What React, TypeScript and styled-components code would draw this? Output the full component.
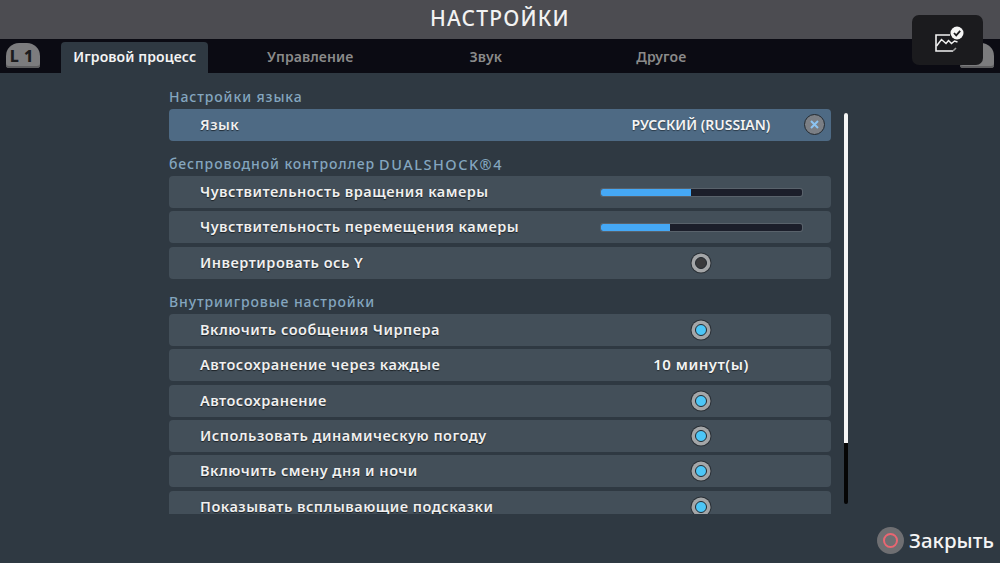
import styled, { createGlobalStyle } from "styled-components";

const GlobalStyle = createGlobalStyle`
  html, body {
    margin: 0;
    height: 100%;
    overflow: hidden;
    background: #2f3942;
  }
`;

const Screen = styled.div`
  position: relative;
  width: 1000px;
  height: 563px;
  display: flex;
  flex-direction: column;
  overflow: hidden;
  background: #2f3942;
  color: #f2f2f2;
  font-family: "Noto Sans", "Open Sans", sans-serif;
`;

const TitleBar = styled.header`
  height: 39px;
  padding-bottom: 3px;
  box-sizing: border-box;
  display: flex;
  align-items: center;
  justify-content: center;
  background: #4c4c51;
  font-size: 21px;
  font-weight: 500;
  letter-spacing: 1.2px;
`;

const TabBar = styled.nav`
  height: 34px;
  display: flex;
  align-items: flex-end;
  padding-left: 6px;
  background: #0b0b13;
`;

const Shoulder = styled.div<{ $side: "left" | "right" }>`
  width: 34px;
  height: 25px;
  margin-bottom: 5px;
  padding: ${(p) => (p.$side === "right" ? "0 10px 0 0" : "0 0 0 2px")};
  box-sizing: border-box;
  display: flex;
  align-items: center;
  justify-content: center;
  background: #7c7c7e;
  border-radius: 13px 13px 3px 3px;
  box-shadow: inset 0 -2px 0 #5e5e60;
  color: #1c1c1e;
  font-size: 16px;
  font-weight: 800;
  letter-spacing: 5px;
  margin-left: ${(p) => (p.$side === "right" ? "auto" : "0")};
  margin-right: ${(p) => (p.$side === "right" ? "6px" : "0")};
`;

const Tabs = styled.div`
  display: flex;
  margin-left: 7px;
`;

const TabCell = styled.div`
  width: 175.5px;
  display: flex;
  justify-content: center;
`;

const Tab = styled.div<{ $active?: boolean }>`
  width: 147px;
  height: 31px;
  padding-bottom: 2px;
  box-sizing: border-box;
  display: flex;
  align-items: center;
  justify-content: center;
  border-radius: 4px 4px 0 0;
  background: ${(p) => (p.$active ? "#2f3942" : "transparent")};
  color: ${(p) => (p.$active ? "#f4f4f4" : "#8a8a8a")};
  font-size: 14px;
  font-weight: 600;
  letter-spacing: 0.1px;
`;

const Body = styled.main`
  height: 441px;
  display: flex;
  align-items: flex-start;
  padding: 12px 0 0 169px;
`;

const List = styled.div`
  width: 662px;
  height: 429px;
  overflow: hidden;
`;

const Section = styled.section`
  margin-bottom: 11px;
`;

const SectionTitle = styled.h2`
  height: 24px;
  margin: 0;
  padding-bottom: 1px;
  box-sizing: border-box;
  display: flex;
  align-items: center;
  color: #84a6bf;
  font-size: 14px;
  font-weight: 500;
  letter-spacing: 0.9px;
`;

const Brand = styled.span`
  margin-left: 4px;
  font-size: 14.5px;
  letter-spacing: 1.5px;
`;

const Row = styled.div<{ $selected?: boolean }>`
  position: relative;
  height: 32px;
  margin-bottom: 3.4px;
  padding: 0 29.5px 2px 31px;
  box-sizing: border-box;
  display: flex;
  align-items: center;
  justify-content: space-between;
  border-radius: 4px;
  background: ${(p) => (p.$selected ? "#4e6a84" : "#434f59")};
`;

const Label = styled.span`
  color: #f0f0f0;
  font-size: 14.5px;
  font-weight: 600;
  letter-spacing: 0.5px;
  text-shadow: 0 1px 1px rgba(0, 0, 0, 0.6);
`;

const Control = styled.div`
  width: 201px;
  display: flex;
  align-items: center;
  justify-content: center;
`;

const Value = styled.span<{ $large?: boolean }>`
  white-space: nowrap;
  color: #f4f4f4;
  font-size: ${(p) => (p.$large ? "15px" : "14px")};
  font-weight: 600;
  letter-spacing: ${(p) => (p.$large ? "0.5px" : "0")};
  text-shadow: 0 1px 1px rgba(0, 0, 0, 0.45);
`;

const ClearButton = styled.div`
  position: absolute;
  right: 6px;
  top: 5px;
  width: 19px;
  height: 19px;
  display: flex;
  align-items: center;
  justify-content: center;
  border-radius: 50%;
  border: 1px solid #23292f;
  background: #7b7f85;
`;

const Track = styled.div`
  width: 201px;
  height: 7px;
  margin-top: 2px;
  border-radius: 2px;
  background: #1b1e2a;
  box-shadow: 0 0 0 1px #59626b;
  overflow: hidden;
`;

const Fill = styled.div`
  height: 100%;
  background: #45a8f5;
`;

const Toggle = styled.div<{ $on: boolean }>`
  width: 10px;
  height: 10px;
  margin-top: 2px;
  border-radius: 50%;
  border: 1px solid #23292f;
  background: ${(p) => (p.$on ? "#4cc6f7" : "#3a3a3c")};
  box-shadow: 0 0 0 3.5px #a4a6a8, 0 0 0 4.5px #2a3036;
`;

const Scrollbar = styled.div`
  width: 4px;
  height: 391px;
  margin: 28px 0 0 13px;
  border-radius: 2px;
  background: #050505;
  overflow: hidden;
`;

const ScrollThumb = styled.div`
  height: 330px;
  background: #f5f5f5;
`;

const Toast = styled.div`
  position: absolute;
  left: 912px;
  top: 15px;
  width: 71px;
  height: 50px;
  padding-left: 4px;
  box-sizing: border-box;
  display: flex;
  align-items: center;
  justify-content: center;
  border-radius: 7px;
  background: #1b1b1e;
`;

const CloseHint = styled.div`
  position: absolute;
  left: 877px;
  top: 526px;
  display: flex;
  align-items: center;
  gap: 5px;
  font-size: 20.5px;
  font-weight: 500;
  line-height: 28px;
  color: #f4f4f4;
`;

const CircleButton = styled.div`
  width: 27px;
  height: 27px;
  display: flex;
  align-items: center;
  justify-content: center;
  border-radius: 50%;
  background: #6f6f72;
`;

const CircleGlyph = styled.div`
  width: 11px;
  height: 11px;
  border-radius: 50%;
  border: 2px solid #ea6672;
`;

function ToastIcon() {
  return (
    <svg width="30" height="28" viewBox="0 0 30 28" fill="none">
      <path d="M15 9H1v16h17" stroke="#f2f2f2" strokeWidth="1.6" />
      <path
        d="M1.5 20l5-6.5 4.5 4 2.5-3 3 3 3-2.5 3 1"
        stroke="#f2f2f2"
        strokeWidth="1.5"
      />
      <path d="M18 25l3-3" stroke="#9a9a9a" strokeWidth="1.6" />
      <circle cx="22" cy="7" r="6.5" fill="#f5f5f5" />
      <path d="M19 7l2.2 2.3L25.2 4.8" stroke="#1b1b1e" strokeWidth="1.8" />
    </svg>
  );
}

function Slider({ percent }: { percent: number }) {
  return (
    <Track>
      <Fill style={{ width: `${percent}%` }} />
    </Track>
  );
}

function App() {
  return (
    <Screen>
      <GlobalStyle />
      <TitleBar>НАСТРОЙКИ</TitleBar>
      <TabBar>
        <Shoulder $side="left">L1</Shoulder>
        <Tabs>
          <TabCell>
            <Tab $active>Игровой процесс</Tab>
          </TabCell>
          <TabCell>
            <Tab>Управление</Tab>
          </TabCell>
          <TabCell>
            <Tab>Звук</Tab>
          </TabCell>
          <TabCell>
            <Tab>Другое</Tab>
          </TabCell>
        </Tabs>
        <Shoulder $side="right">R1</Shoulder>
      </TabBar>
      <Body>
        <List>
          <Section>
            <SectionTitle>Настройки языка</SectionTitle>
            <Row $selected>
              <Label>Язык</Label>
              <Control>
                <Value>РУССКИЙ (RUSSIAN)</Value>
              </Control>
              <ClearButton>
                <svg width="11" height="11" viewBox="0 0 11 11">
                  <path d="M2 2l7 7M9 2l-7 7" stroke="#8cc4f2" strokeWidth="2" />
                </svg>
              </ClearButton>
            </Row>
          </Section>
          <Section>
            <SectionTitle>
              беспроводной контроллер<Brand>DUALSHOCK®4</Brand>
            </SectionTitle>
            <Row>
              <Label>Чувствительность вращения камеры</Label>
              <Control>
                <Slider percent={45} />
              </Control>
            </Row>
            <Row>
              <Label>Чувствительность перемещения камеры</Label>
              <Control>
                <Slider percent={34.5} />
              </Control>
            </Row>
            <Row>
              <Label>Инвертировать ось Y</Label>
              <Control>
                <Toggle $on={false} />
              </Control>
            </Row>
          </Section>
          <Section>
            <SectionTitle>Внутриигровые настройки</SectionTitle>
            <Row>
              <Label>Включить сообщения Чирпера</Label>
              <Control>
                <Toggle $on />
              </Control>
            </Row>
            <Row>
              <Label>Автосохранение через каждые</Label>
              <Control>
                <Value $large>10 минут(ы)</Value>
              </Control>
            </Row>
            <Row>
              <Label>Автосохранение</Label>
              <Control>
                <Toggle $on />
              </Control>
            </Row>
            <Row>
              <Label>Использовать динамическую погоду</Label>
              <Control>
                <Toggle $on />
              </Control>
            </Row>
            <Row>
              <Label>Включить смену дня и ночи</Label>
              <Control>
                <Toggle $on />
              </Control>
            </Row>
            <Row>
              <Label>Показывать всплывающие подсказки</Label>
              <Control>
                <Toggle $on />
              </Control>
            </Row>
          </Section>
        </List>
        <Scrollbar>
          <ScrollThumb />
        </Scrollbar>
      </Body>
      <Toast>
        <ToastIcon />
      </Toast>
      <CloseHint>
        <CircleButton>
          <CircleGlyph />
        </CircleButton>
        Закрыть
      </CloseHint>
    </Screen>
  );
}

export default App;
